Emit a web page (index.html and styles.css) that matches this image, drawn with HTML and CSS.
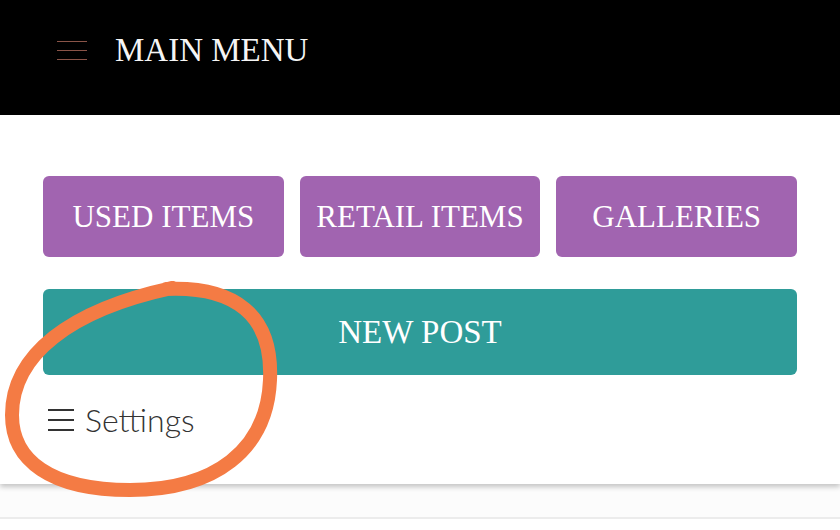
FILE: index.html
```html
<!DOCTYPE html>
<html lang="en">
<head>
    <meta charset="UTF-8">
    <meta name="viewport" content="width=device-width, initial-scale=1.0">
    <title>Main Menu</title>
    <link rel="stylesheet" href="styles.css">
</head>
<body>

    <header class="top-bar">
        <span class="menu-toggle">
            <span></span><span></span><span></span>
        </span>
        <h1>MAIN MENU</h1>
    </header>

    <main class="panel">
        <nav class="item-buttons">
            <a class="btn btn-purple" href="#">USED ITEMS</a>
            <a class="btn btn-purple" href="#">RETAIL ITEMS</a>
            <a class="btn btn-purple" href="#">GALLERIES</a>
        </nav>

        <a class="btn btn-teal" href="#">NEW POST</a>

        <div class="settings">
            <svg class="settings-icon" width="28" height="24" viewBox="0 0 28 24">
                <path d="M1 2h26M1 12h26M1 22h26" stroke="#333" stroke-width="2" fill="none"/>
            </svg>
            <span>Settings</span>
        </div>
    </main>

    <div class="next-card"></div>

    <!-- hand-drawn highlight on top of the page -->
    <svg class="scribble" width="840" height="530" viewBox="0 0 840 530">
        <path d="M166 289 C 235 286, 273 315, 270 380 C 267 450, 215 490, 130 490 C 50 490, 12 460, 12 415 C 12 355, 70 310, 172 288"
              stroke="#f47b44" stroke-width="14" stroke-linecap="round" stroke-linejoin="round" fill="none"/>
    </svg>

</body>
</html>
```

FILE: styles.css
```css
:root {
    --purple: #a164b0;
    --teal: #2f9c99;
    --text-dark: #333333;
    --radius: 6px;
}

* {
    box-sizing: border-box;
    margin: 0;
    padding: 0;
}

body {
    font-family: "Liberation Serif", "Times New Roman", serif;
    background-color: #fcfcfc;
    width: 840px;
    height: 530px;
    overflow: hidden;
    position: relative;
}

.top-bar {
    height: 115px;
    background-color: #000;
    display: flex;
    align-items: center;
    padding-left: 57px;
    padding-bottom: 15px;
}

.menu-toggle {
    width: 30px;
    display: flex;
    flex-direction: column;
    gap: 8px;
    margin-right: 28px;
}

.menu-toggle span {
    display: block;
    height: 1px;
    background-color: #8a5448;
}

.top-bar h1 {
    color: #f5f5f5;
    font-weight: normal;
    font-size: 33px;
}

.panel {
    background-color: #fff;
    height: 369px;
    padding: 61px 43px 0;
    box-shadow: 0 3px 5px rgba(0, 0, 0, 0.22);
    position: relative;
}

.item-buttons {
    display: flex;
    gap: 16px;
    margin-bottom: 32px;
}

.btn {
    display: flex;
    justify-content: center;
    align-items: center;
    color: #fff;
    text-decoration: none;
    border-radius: var(--radius);
    font-size: 31px;
}

.btn-purple {
    flex: 1;
    height: 81px;
    background-color: var(--purple);
}

.btn-teal {
    height: 86px;
    background-color: var(--teal);
    font-size: 33px;
}

.settings {
    display: flex;
    align-items: center;
    gap: 10px;
    margin-top: 25px;
    padding-left: 4px;
    font-family: Lato, "Noto Sans", sans-serif;
    font-weight: 300;
    font-size: 32px;
    color: var(--text-dark);
}

.next-card {
    margin-top: 33px;
    height: 20px;
    border-top: 2px solid #ececec;
    background-color: #fff;
}

.scribble {
    position: absolute;
    left: 0;
    top: 0;
    pointer-events: none;
}
```
